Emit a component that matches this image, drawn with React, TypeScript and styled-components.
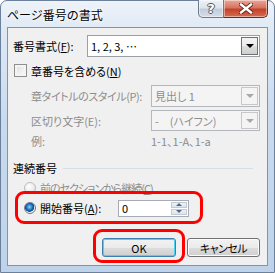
import React from "react";
import styled, { createGlobalStyle } from "styled-components";

const GlobalStyle = createGlobalStyle`
  html, body {
    margin: 0;
    padding: 0;
    background: #ffffff;
  }
  body {
    font-family: "Noto Sans CJK JP", "Noto Sans", sans-serif;
    font-size: 11px;
    color: #000;
  }
`;

// frame
const Window = styled.div`
  width: 275px;
  height: 273px;
  box-sizing: border-box;
  display: flex;
  flex-direction: column;
  border: 1px solid #6b819b;
  border-radius: 7px 7px 0 0;
  padding: 0 6px 6px 6px;
  background: linear-gradient(180deg, #eef3f9 0%, #dde8f4 12%, #c9daee 45%, #bed3ea 100%);
`;

const TitleBar = styled.div`
  height: 26px;
  display: flex;
  align-items: flex-start;
`;

const Title = styled.div`
  font-size: 12px;
  line-height: 14px;
  margin-top: 7px;
  text-shadow: 0 0 5px #fff, 0 0 3px #fff;
`;

const CaptionButtons = styled.div`
  margin-left: auto;
  margin-top: -1px;
  display: flex;
`;

const CaptionButton = styled.div<{ $close?: boolean }>`
  width: ${(p) => (p.$close ? 44 : 26)}px;
  height: 18px;
  box-sizing: border-box;
  border: 1px solid ${(p) => (p.$close ? "#6d2a1e" : "#6b7a8c")};
  border-top: none;
  border-left-width: ${(p) => (p.$close ? 0 : 1)}px;
  border-radius: ${(p) => (p.$close ? "0 0 5px 0" : "0 0 0 5px")};
  background: ${(p) =>
    p.$close
      ? "linear-gradient(180deg, #eaa797 0%, #d67460 45%, #c2432b 55%, #d66a4f 100%)"
      : "linear-gradient(180deg, #eef2f7 0%, #dde4ec 45%, #c3cdd9 55%, #d6dee8 100%)"};
  box-shadow: inset 0 0 0 1px rgba(255, 255, 255, 0.45);
  display: flex;
  align-items: center;
  justify-content: center;
`;

const HelpGlyph = styled.span`
  font-family: "DejaVu Sans", sans-serif;
  font-weight: bold;
  font-size: 13px;
  line-height: 13px;
  color: #fff;
  text-shadow: -1px 0 #4a5666, 1px 0 #4a5666, 0 -1px #4a5666, 0 1px #4a5666;
`;

// client area
const Client = styled.div`
  flex: 1;
  position: relative;
  display: flex;
  flex-direction: column;
  background: #f0f0f0;
  border: 1px solid #8593a5;
  padding: 7px 7px 0 5px;
  font-feature-settings: "palt";
`;

const FieldRow = styled.div<{ $h: number; $mt?: number; $indent?: number }>`
  display: flex;
  align-items: center;
  height: ${(p) => p.$h}px;
  margin-top: ${(p) => p.$mt ?? 0}px;
  padding-left: ${(p) => p.$indent ?? 0}px;
`;

const Label = styled.div<{ $w?: number; $disabled?: boolean; $spacing?: number }>`
  width: ${(p) => (p.$w ? `${p.$w}px` : "auto")};
  flex-shrink: 0;
  white-space: nowrap;
  color: ${(p) => (p.$disabled ? "#8d8d8d" : "#000")};
  letter-spacing: ${(p) => p.$spacing ?? 0}px;
  line-height: 14px;
`;

const Key = styled.span`
  text-decoration: underline;
  text-underline-offset: 1px;
`;

const Select = styled.div<{ $disabled?: boolean }>`
  flex: 1;
  height: 100%;
  box-sizing: border-box;
  display: flex;
  align-items: stretch;
  border: 1px solid ${(p) => (p.$disabled ? "#b4b8bc" : "#9a9fa6")};
  background: ${(p) => (p.$disabled ? "#f4f4f4" : "#ffffff")};
  color: ${(p) => (p.$disabled ? "#8d8d8d" : "#000")};
`;

const SelectText = styled.div`
  flex: 1;
  display: flex;
  align-items: center;
  padding-left: 3px;
  white-space: nowrap;
`;

const DropButton = styled.div<{ $disabled?: boolean }>`
  width: 17px;
  margin: 1px;
  box-sizing: border-box;
  border: 1px solid ${(p) => (p.$disabled ? "#c8c8c8" : "#707070")};
  background: ${(p) =>
    p.$disabled
      ? "#f4f4f4"
      : "linear-gradient(180deg, #f3f3f3 0%, #ebebeb 50%, #dddddd 51%, #cfcfcf 100%)"};
  display: flex;
  align-items: center;
  justify-content: center;
`;

const Triangle = styled.div<{ $disabled?: boolean }>`
  width: 0;
  height: 0;
  border-left: 4px solid transparent;
  border-right: 4px solid transparent;
  border-top: 4px solid ${(p) => (p.$disabled ? "#a8a8a8" : "#000")};
`;

const CheckBox = styled.div`
  width: 13px;
  height: 13px;
  box-sizing: border-box;
  margin-left: 1px;
  margin-right: 4px;
  border: 1px solid #8f8f8f;
  background: linear-gradient(135deg, #dcdcdc 0%, #f4f4f4 70%, #ffffff 100%);
  box-shadow: inset 0 0 0 2px #f4f4f4;
`;

const GroupLine = styled.div`
  flex: 1;
  height: 1px;
  margin-left: 6px;
  margin-right: 7px;
  background: #d5dfe5;
`;

const Radio = styled.div<{ $checked?: boolean }>`
  width: 12px;
  height: 12px;
  box-sizing: border-box;
  border-radius: 50%;
  margin-right: 4px;
  flex-shrink: 0;
  border: 1px solid ${(p) => (p.$checked ? "#6f7b88" : "#b9bcc0")};
  background: ${(p) =>
    p.$checked
      ? "radial-gradient(circle at 45% 40%, #8fd3ff 0%, #1f78c4 35%, #10467a 55%, #f4f4f4 62%, #e0e0e0 100%)"
      : "radial-gradient(circle at 40% 35%, #ffffff 0%, #ececec 55%, #d6d6d6 100%)"};
`;

const Spinner = styled.div`
  width: 71px;
  height: 17px;
  box-sizing: border-box;
  display: flex;
  border: 1px solid #a5acb5;
  background: #fff;
`;

const SpinText = styled.div`
  flex: 1;
  display: flex;
  align-items: center;
  padding-left: 3px;
`;

const SpinButtons = styled.div`
  width: 16px;
  display: flex;
  flex-direction: column;
  gap: 1px;
  margin: 1px;
`;

const SpinButton = styled.div`
  flex: 1;
  display: flex;
  align-items: center;
  justify-content: center;
  background: linear-gradient(180deg, #eef2f6 0%, #dce3ea 100%);
  border: 1px solid #c3cad3;
`;

const SpinArrow = styled.div<{ $up?: boolean }>`
  width: 0;
  height: 0;
  border-left: 3px solid transparent;
  border-right: 3px solid transparent;
  ${(p) =>
    p.$up ? "border-bottom: 3px solid #4d6a8e;" : "border-top: 3px solid #4d6a8e;"}
`;

const ButtonRow = styled.div`
  display: flex;
  justify-content: flex-end;
  gap: 11px;
  margin-top: 21px;
  height: 19px;
`;

const PushButton = styled.div<{ $w: number; $focused?: boolean; $spacing?: number }>`
  width: ${(p) => p.$w}px;
  height: 19px;
  box-sizing: border-box;
  border: 1px solid ${(p) => (p.$focused ? "#3c7fb1" : "#707070")};
  border-radius: 3px;
  background: linear-gradient(180deg, #f2f2f2 0%, #ebebeb 50%, #dddddd 51%, #cfcfcf 100%);
  box-shadow: inset 0 0 0 1px ${(p) => (p.$focused ? "#48d6f5" : "#fcfcfc")};
  display: flex;
  align-items: center;
  justify-content: center;
  letter-spacing: ${(p) => p.$spacing ?? 0}px;
`;

// annotation overlay
const Ring = styled.div<{ $x: number; $y: number; $w: number; $h: number }>`
  position: absolute;
  left: ${(p) => p.$x}px;
  top: ${(p) => p.$y}px;
  width: ${(p) => p.$w}px;
  height: ${(p) => p.$h}px;
  box-sizing: border-box;
  border: 3px solid #ff0000;
  border-radius: 9px;
  pointer-events: none;
`;

const CloseIcon = () => (
  <svg width="14" height="11" viewBox="0 0 14 11">
    <path d="M2 1.5 L12 9.5 M12 1.5 L2 9.5" stroke="#5a2418" strokeWidth="4.2" strokeLinecap="square" />
    <path d="M2 1.5 L12 9.5 M12 1.5 L2 9.5" stroke="#ffffff" strokeWidth="2.4" strokeLinecap="square" />
  </svg>
);

const App = (): JSX.Element => {
  return (
    <>
      <GlobalStyle />
      <Window>
        <TitleBar>
          <Title>ページ番号の書式</Title>
          <CaptionButtons>
            <CaptionButton>
              <HelpGlyph>?</HelpGlyph>
            </CaptionButton>
            <CaptionButton $close>
              <CloseIcon />
            </CaptionButton>
          </CaptionButtons>
        </TitleBar>
        <Client>
          <FieldRow $h={22}>
            <Label $w={74}>
              番号書式(<Key>F</Key>):
            </Label>
            <Select>
              <SelectText>1, 2, 3, …</SelectText>
              <DropButton>
                <Triangle />
              </DropButton>
            </Select>
          </FieldRow>

          <FieldRow $h={13} $mt={7}>
            <CheckBox />
            <Label>
              章番号を含める(<Key>N</Key>)
            </Label>
          </FieldRow>

          <FieldRow $h={22} $mt={8} $indent={18}>
            <Label $w={120} $disabled $spacing={-0.4}>
              章タイトルのスタイル(P):
            </Label>
            <Select $disabled>
              <SelectText>見出し 1</SelectText>
              <DropButton $disabled>
                <Triangle $disabled />
              </DropButton>
            </Select>
          </FieldRow>

          <FieldRow $h={21} $mt={3} $indent={18}>
            <Label $w={120} $disabled>
              区切り文字(E):
            </Label>
            <Select $disabled>
              <SelectText>-　(ハイフン)</SelectText>
              <DropButton $disabled>
                <Triangle $disabled />
              </DropButton>
            </Select>
          </FieldRow>

          <FieldRow $h={14} $mt={3} $indent={18}>
            <Label $w={120} $disabled>
              例:
            </Label>
            <Label $disabled>1-1、1-A、1-a</Label>
          </FieldRow>

          <FieldRow $h={16} $mt={12}>
            <Label>連続番号</Label>
            <GroupLine />
          </FieldRow>

          <FieldRow $h={14} $mt={5} $indent={11}>
            <Radio />
            <Label $disabled $spacing={-1}>
              前のセクションから継続(<Key>C</Key>)
            </Label>
          </FieldRow>

          <FieldRow $h={18} $mt={4} $indent={11}>
            <Radio $checked />
            <Label $w={78}>
              開始番号(<Key>A</Key>):
            </Label>
            <Spinner>
              <SpinText>0</SpinText>
              <SpinButtons>
                <SpinButton>
                  <SpinArrow $up />
                </SpinButton>
                <SpinButton>
                  <SpinArrow />
                </SpinButton>
              </SpinButtons>
            </Spinner>
          </FieldRow>

          <ButtonRow>
            <PushButton $w={74} $focused>
              OK
            </PushButton>
            <PushButton $w={73} $spacing={-0.5}>
              キャンセル
            </PushButton>
          </ButtonRow>

          <Ring $x={7} $y={163} $w={188} $h={33} />
          <Ring $x={85} $y={201} $w={92} $h={34} />
        </Client>
      </Window>
    </>
  );
};

export default App;
